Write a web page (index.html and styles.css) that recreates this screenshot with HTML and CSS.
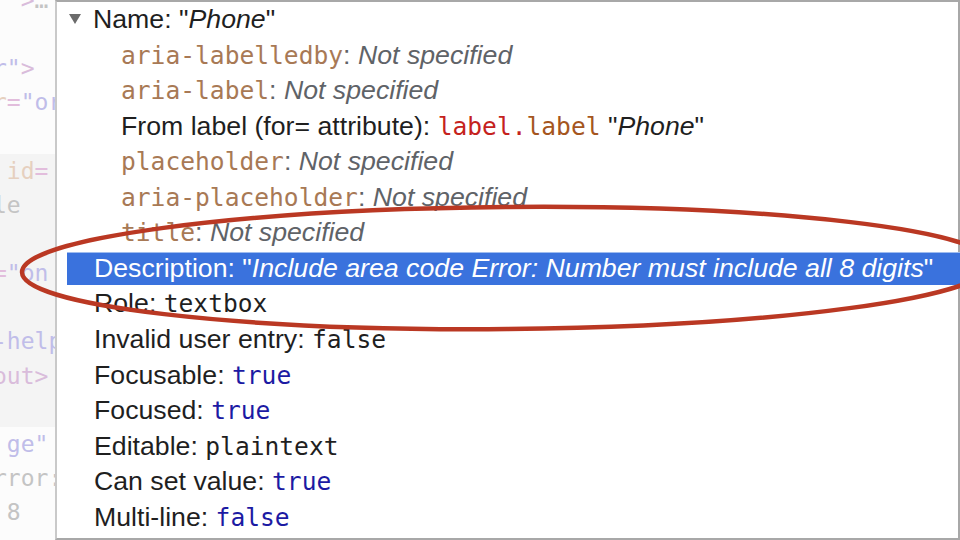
FILE: index.html
```html
<!DOCTYPE html>
<html>
<head>
<meta charset="utf-8">
<link rel="stylesheet" href="styles.css">
</head>
<body>
<div class="page">
  <div class="code">
    <div class="code-lines">
      <div class="cl">  <span class="pu">&gt;</span><span class="gr">…</span></div>
      <div class="cl"> </div>
      <div class="cl"><span class="lv">r"</span><span class="pu">&gt;</span></div>
      <div class="cl"><span class="tn">r</span><span class="pk">=</span><span class="lv">"or</span></div>
      <div class="cl"> </div>
      <div class="band">
        <div class="cl"> <span class="tn">id</span><span class="pk">=</span></div>
        <div class="cl"><span class="gr">le</span></div>
        <div class="cl"> </div>
        <div class="cl"><span class="pk">=</span><span class="lv">"on</span></div>
        <div class="cl"> </div>
        <div class="cl"><span class="lv">-help</span></div>
        <div class="cl"><span class="pu">out&gt;</span></div>
        <div class="cl"> </div>
      </div>
      <div class="cl"> <span class="lv">ge"</span></div>
      <div class="cl"><span class="gr">rror:</span></div>
      <div class="cl"> <span class="gr">8</span></div>
    </div>
  </div>
  <div class="tree">
    <div class="row root"><span class="tri"></span>Name: "<i>Phone</i>"</div>
    <div class="row child"><span class="attr">aria-labelledby</span><span class="colon">:</span> <i class="ns">Not specified</i></div>
    <div class="row child"><span class="attr">aria-label</span><span class="colon">:</span> <i class="ns">Not specified</i></div>
    <div class="row child">From label (for= attribute): <span class="tag">label.</span><span class="cls">label</span> "<i>Phone</i>"</div>
    <div class="row child"><span class="attr">placeholder</span><span class="colon">:</span> <i class="ns">Not specified</i></div>
    <div class="row child"><span class="attr">aria-placeholder</span><span class="colon">:</span> <i class="ns">Not specified</i></div>
    <div class="row child"><span class="attr">title</span><span class="colon">:</span> <i class="ns">Not specified</i></div>
    <div class="row sel">Description: "<i>Include area code Error: Number must include all 8 digits</i>"</div>
    <div class="row">Role: <span class="mono">textbox</span></div>
    <div class="row">Invalid user entry: <span class="mono">false</span></div>
    <div class="row">Focusable: <span class="mono kw">true</span></div>
    <div class="row">Focused: <span class="mono kw">true</span></div>
    <div class="row">Editable: <span class="mono">plaintext</span></div>
    <div class="row">Can set value: <span class="mono kw">true</span></div>
    <div class="row">Multi-line: <span class="mono kw">false</span></div>
  </div>
  <svg class="mark" width="960" height="540" viewBox="0 0 960 540">
    <ellipse cx="506.5" cy="268" rx="484.5" ry="61" transform="rotate(-0.5 506.5 268)" fill="none" stroke="#ba3823" stroke-width="4.5"/>
  </svg>
</div>
</body>
</html>
```
FILE: styles.css
```css
html, body {
  margin: 0;
  padding: 0;
  background: #ffffff;
}
.page {
  position: relative;
  width: 960px;
  height: 540px;
  overflow: hidden;
  display: flex;
}
.code {
  width: 55px;
  flex: none;
  background: #fcfcfc;
  overflow: hidden;
  font-family: "DejaVu Sans Mono", monospace;
  font-size: 23px;
}
.code-lines {
  margin-top: -17px;
  margin-left: -7px;
}
.cl {
  height: 34.15px;
  line-height: 34.15px;
  white-space: pre;
}
.band {
  background: #f4f4f4;
  margin-left: 7px;
  padding-left: 0;
}
.band .cl {
  margin-left: -7px;
}
.pu { color: #d9bcdb; }
.lv { color: #c0bde9; }
.tn { color: #e6d0bf; }
.pk { color: #e2bddc; }
.gr { color: #c4c4c4; }

.tree {
  flex: 1;
  min-width: 0;
  box-sizing: border-box;
  height: 540px;
  border: 2px solid #a8a8a8;
  border-left-color: #c9c9c9;
  font-family: "Liberation Sans", Arial, sans-serif;
  font-size: 26.7px;
  color: #1f1f1f;
}
.row {
  height: 35.57px;
  line-height: 35.57px;
  white-space: nowrap;
  padding-left: 37px;
}
.root {
  padding-left: 12px;
}
.tri {
  display: inline-block;
  width: 0;
  height: 0;
  border-left: 6.5px solid transparent;
  border-right: 6.5px solid transparent;
  border-top: 10px solid #6b6b6b;
  margin-right: 12px;
  vertical-align: 4px;
}
.child {
  padding-left: 64px;
}
.sel {
  height: 33px;
  line-height: 33px;
  margin: 1.28px -2px 1.29px 10px;
  padding-left: 27px;
  background: #3a72dd;
  color: #ffffff;
  box-shadow: inset 0 1px 0 #9fbcef;
}
.attr {
  font-family: "DejaVu Sans Mono", monospace;
  font-size: 24.6px;
  color: #a87955;
}
.colon { color: #5f6368; }
.ns { color: #5f6368; }
.tag {
  font-family: "DejaVu Sans Mono", monospace;
  font-size: 24.6px;
  color: #c5221d;
}
.cls {
  font-family: "DejaVu Sans Mono", monospace;
  font-size: 24.6px;
  color: #a5561e;
}
.mono {
  font-family: "DejaVu Sans Mono", monospace;
  font-size: 24.6px;
  color: #1f1f1f;
}
.kw { color: #1c1aa3; }
.mark {
  position: absolute;
  left: 0;
  top: 0;
  pointer-events: none;
}
```
